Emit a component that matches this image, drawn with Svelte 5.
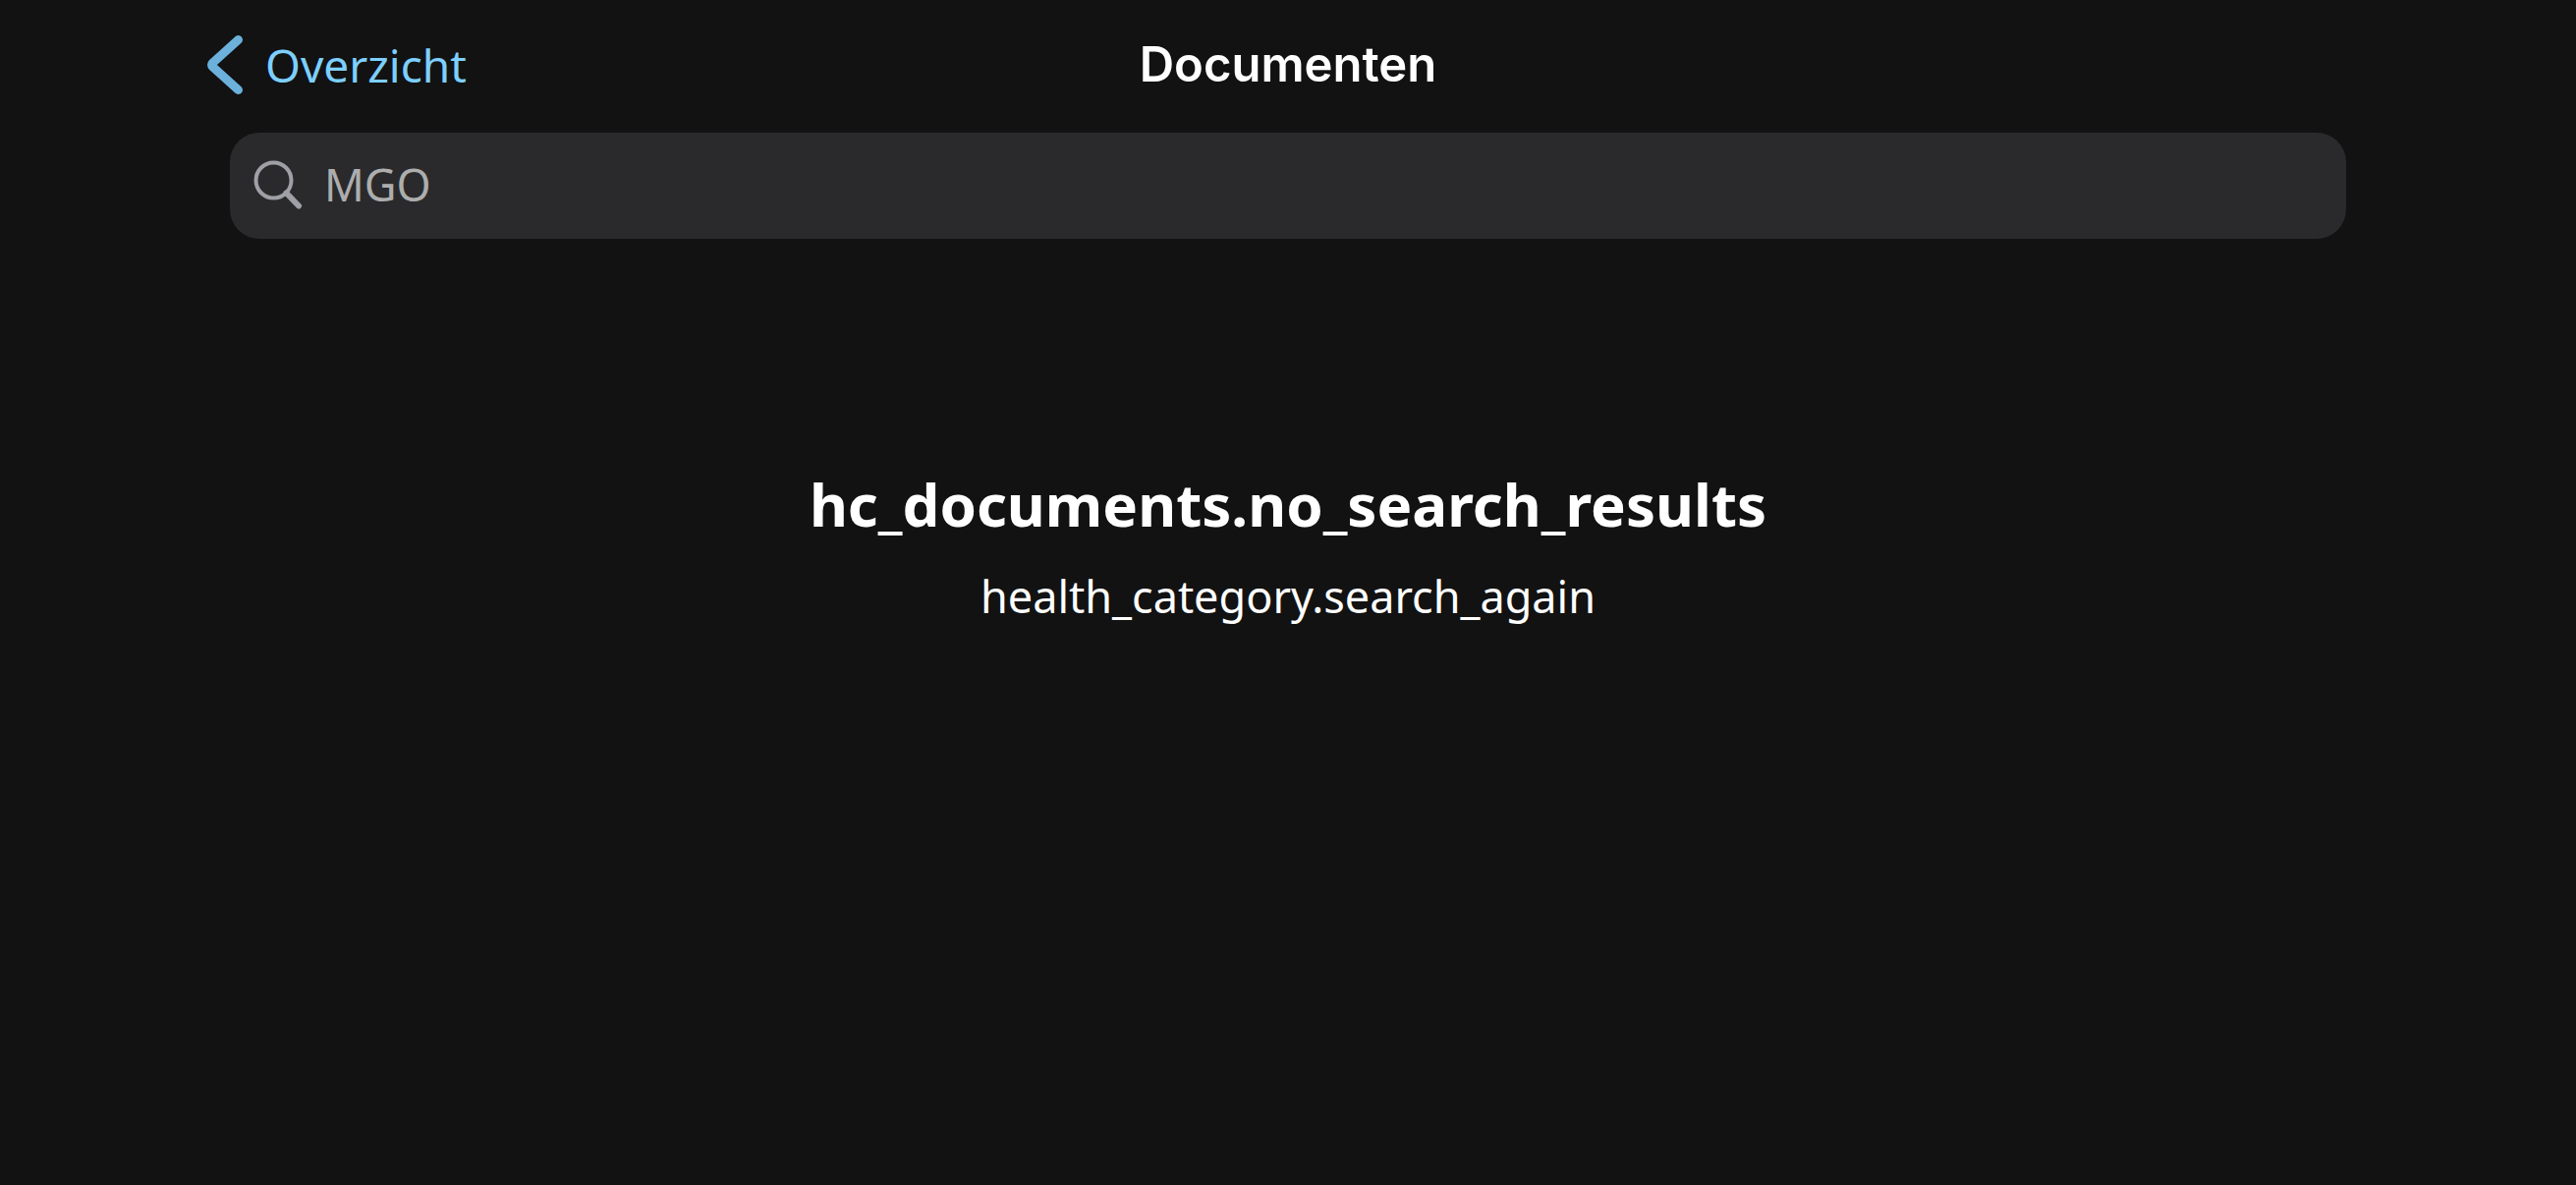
<script>
  let query = $state('MGO');
</script>

<div class="screen">
  <header class="bar">
    <button class="back" type="button">
      <svg class="chevron" viewBox="0 0 38 62" aria-hidden="true">
        <path d="M32.5 5.5 L6.5 29 Q4.500 31 6.500 33 L32.5 56.500" />
      </svg>
      <span>Overzicht</span>
    </button>
    <h1>Documenten</h1>
  </header>

  <label class="search">
    <svg class="glass" viewBox="0 0 50 50" aria-hidden="true">
      <circle cx="20.500" cy="20.500" r="18" />
      <path d="M33.500 33.500 L46 46.500" />
    </svg>
    <input type="text" aria-label="Zoeken" bind:value={query} />
  </label>

  <main class="empty">
    <h2>hc_documents.no_search_results</h2>
    <p>health_category.search_again</p>
  </main>
</div>

<style>
  :global(body) {
    background: #121212;
  }

  .screen {
    min-height: 100vh;
    box-sizing: border-box;
    padding: 0 234px;
    background: #121212;
    color: #fff;
    font-family: 'Noto Sans', 'Open Sans', sans-serif;
  }

  .bar {
    display: grid;
    grid-template-columns: 1fr auto 1fr;
    align-items: center;
    height: 132px;
    margin-bottom: 3px;
  }

  .back {
    display: flex;
    align-items: center;
    justify-self: start;
    gap: 22px;
    margin-left: -24px;
    padding: 0;
    border: 0;
    background: none;
    color: #7dcfff;
    font: inherit;
    font-size: 46px;
    line-height: 64px;
    cursor: pointer;
  }

  .chevron {
    width: 38px;
    height: 62px;
    fill: none;
    stroke: #6bb1db;
    stroke-width: 9;
    stroke-linecap: round;
    stroke-linejoin: round;
  }

  h1 {
    margin: 0;
    font-family: Inter, sans-serif;
    font-size: 49px;
    font-weight: 600;
    line-height: 64px;
  }

  .search {
    display: flex;
    align-items: center;
    gap: 22px;
    height: 108px;
    box-sizing: border-box;
    padding: 0 24px 2px;
    border-radius: 30px;
    background: #2a2a2c;
  }

  .glass {
    flex: none;
    width: 50px;
    height: 50px;
    fill: none;
    stroke: #9f9fa6;
    stroke-width: 4;
    stroke-linecap: round;
  }

  .glass path {
    stroke-width: 6;
  }

  input {
    flex: 1;
    min-width: 0;
    padding: 0;
    border: 0;
    outline: none;
    background: none;
    color: #adadad;
    font: inherit;
    font-size: 45px;
    line-height: 64px;
  }

  .empty {
    padding-top: 228px;
    text-align: center;
  }

  h2 {
    margin: 0;
    font-size: 60px;
    font-weight: 700;
    line-height: 84px;
  }

  p {
    margin: 20px 0 0;
    font-size: 45px;
    line-height: 64px;
  }
</style>
